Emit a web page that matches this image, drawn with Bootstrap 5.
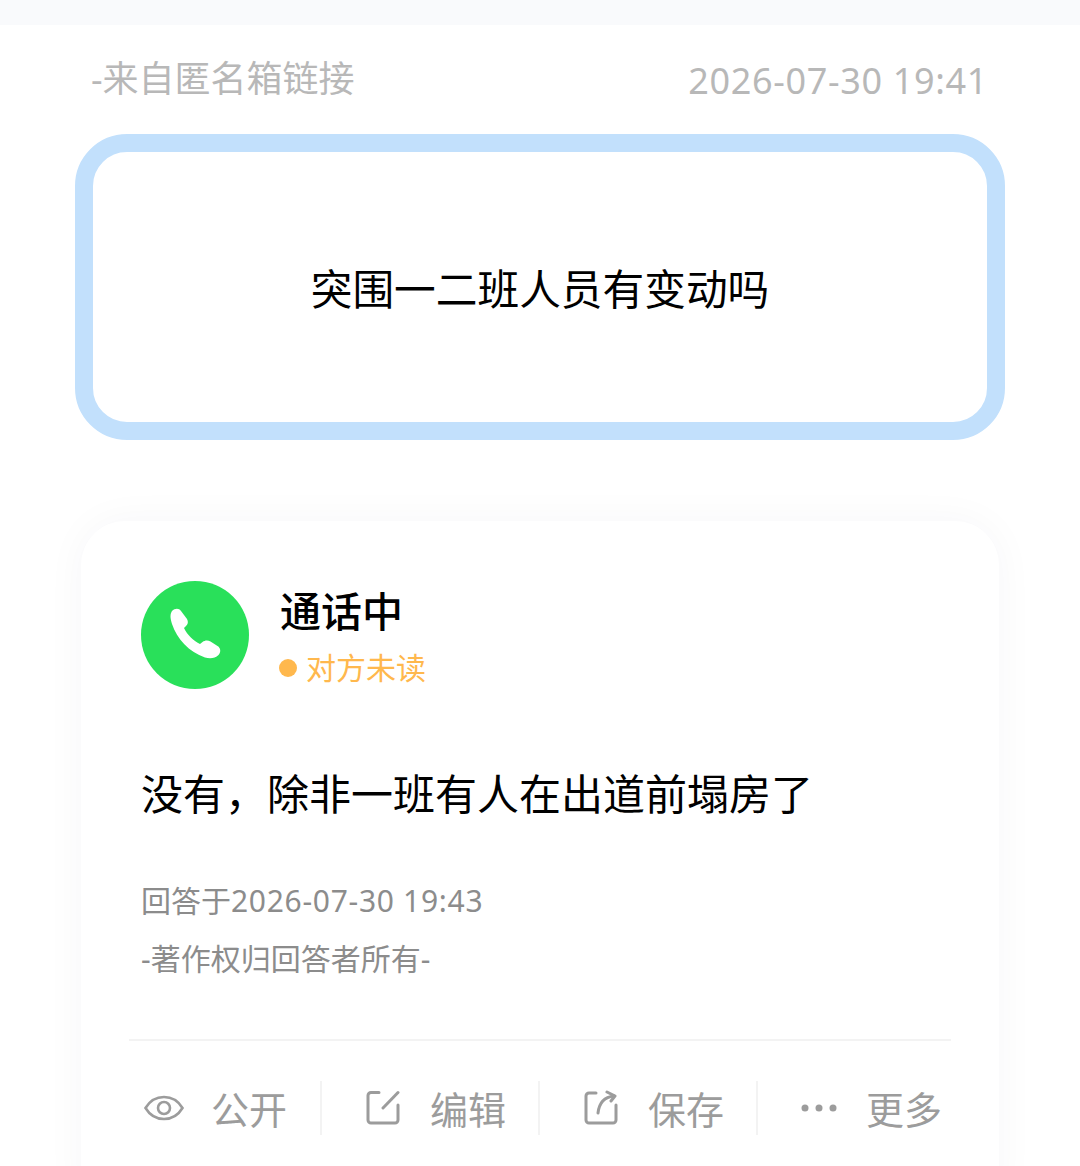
<!DOCTYPE html>
<html lang="zh">
<head>
<meta charset="utf-8">
<title>匿名箱</title>
<link href="https://cdn.jsdelivr.net/npm/bootstrap@5.3.0/dist/css/bootstrap.min.css" rel="stylesheet">
<style>
html,body{height:1166px;overflow:hidden;background:#fff;}
body{font-family:"Noto Sans CJK SC","Noto Sans",sans-serif;color:#000;}
.topband{height:25px;background:#f9fafc;}
.meta-row{padding:30px 92px 0 91px;height:109px;font-size:36px;line-height:48px;color:#b8b8b8;font-weight:400;font-family:"Noto Sans","Noto Sans CJK SC",sans-serif;}
.date-text{font-size:36px;letter-spacing:.65px;margin-top:2px;}
.ask-box{margin:0 75px;height:306px;border:18px solid #c2e0fc;border-radius:52px;font-size:41.7px;}
.reply-card{margin:81px 81px 0;height:700px;border-radius:44px;box-shadow:0 0 40px rgba(40,50,80,.04);padding:60px 48px 0;}
.head-row{padding-left:12px;gap:31px;}
.avatar-call{width:108px;height:108px;border-radius:50%;background:#29e05a;flex:none;}
.call-title{font-size:41px;line-height:52px;font-weight:500;margin-top:2px;}
.call-state{font-size:30px;line-height:40px;color:#ffb84d;gap:9px;margin-top:11px;margin-left:-1px;}
.state-dot{width:18px;height:18px;border-radius:50%;background:#ffb84d;margin-top:3px;}
.answer-text{font-size:42px;line-height:56px;margin:75px 0 0 12px;}
.info-line{font-size:30px;line-height:40px;color:#8c8c8c;margin-left:12px;font-weight:400;font-family:"Noto Sans","Noto Sans CJK SC",sans-serif;}
.info-date{margin-top:61px;letter-spacing:.7px;}
.info-date span{letter-spacing:0;}
.info-sep{margin-top:18px;}
.rule-line{height:2px;background:#f3f3f3;margin-top:60px;}
.action-row{margin-top:40px;height:54px;}
.action-cell{flex:none;width:218px;color:#9c9c9c;font-size:38px;line-height:50px;font-weight:400;border-right:2px solid #f3f3f3;padding-left:44px;gap:30px;}
.action-cell:first-child{width:193px;padding-left:15px;gap:27px;}
.action-cell:last-child{width:193px;border-right:0;padding-left:43px;gap:29px;}
.act-icon{flex:none;display:block;}
</style>
</head>
<body>
<div class="topband"></div>
<div class="meta-row d-flex justify-content-between">
  <span>-来自匿名箱链接</span>
  <span class="date-text">2026-07-30 19:41</span>
</div>
<div class="ask-box d-flex align-items-center justify-content-center">突围一二班人员有变动吗</div>
<div class="reply-card bg-white">
  <div class="head-row d-flex">
    <div class="avatar-call d-flex align-items-center justify-content-center">
      <svg width="108" height="108" viewBox="0 0 108 108"><path d="M31 30C34 27 38 27 40 30L46 38C47.500 41 47 43 45 45L43 47C46 54 53 60 59 63L61.500 61C64 59 67 59 69.500 60.500L76.500 65C80 67 80 71.500 77.500 74C74 77.500 69 78 64 76.500C48 71 36 58 31 43C29 37 29 33 31 30Z" fill="#fff"/></svg>
    </div>
    <div>
      <div class="call-title">通话中</div>
      <div class="call-state d-flex align-items-center"><span class="state-dot"></span><span>对方未读</span></div>
    </div>
  </div>
  <div class="answer-text">没有，除非一班有人在出道前塌房了</div>
  <div class="info-line info-date"><span>回答于</span>2026-07-30 19:43</div>
  <div class="info-line info-sep">-著作权归回答者所有-</div>
  <div class="rule-line"></div>
  <div class="action-row d-flex">
    <div class="action-cell d-flex align-items-center">
      <svg class="act-icon" width="40" height="26" viewBox="0 0 40 26" fill="none" stroke="#9c9c9c" stroke-width="2.600"><path d="M1.500 13C6 5.500 12 2 20 2s14 3.500 18.500 11C34 20.500 28 24 20 24S6 20.500 1.500 13Z"/><circle cx="20" cy="13" r="6"/></svg>
      <span>公开</span>
    </div>
    <div class="action-cell d-flex align-items-center">
      <svg class="act-icon" width="34" height="36" viewBox="0 0 34 36" fill="none" stroke="#9c9c9c" stroke-width="3" stroke-linecap="round"><path d="M13 2.500H5a3 3 0 0 0-3 3V30a3 3 0 0 0 3 3H29a3 3 0 0 0 3-3V15"/><path d="M17 18L32 2.500"/></svg>
      <span>编辑</span>
    </div>
    <div class="action-cell d-flex align-items-center">
      <svg class="act-icon" width="34" height="36" viewBox="0 0 34 36" fill="none" stroke="#9c9c9c" stroke-width="3" stroke-linecap="round" stroke-linejoin="round"><path d="M12 3H5a3 3 0 0 0-3 3V30a3 3 0 0 0 3 3H29a3 3 0 0 0 3-3V15"/><path d="M14 23C15 14 20 7 30 6"/><path d="M23 2L31 6L27 11"/></svg>
      <span>保存</span>
    </div>
    <div class="action-cell d-flex align-items-center">
      <svg class="act-icon" width="36" height="10" viewBox="0 0 36 10" fill="#9c9c9c"><circle cx="4" cy="5" r="3.500"/><circle cx="18" cy="5" r="3.500"/><circle cx="32" cy="5" r="3.500"/></svg>
      <span>更多</span>
    </div>
  </div>
</div>
<script src="https://cdn.jsdelivr.net/npm/bootstrap@5.3.0/dist/js/bootstrap.bundle.min.js"></script>
</body>
</html>
